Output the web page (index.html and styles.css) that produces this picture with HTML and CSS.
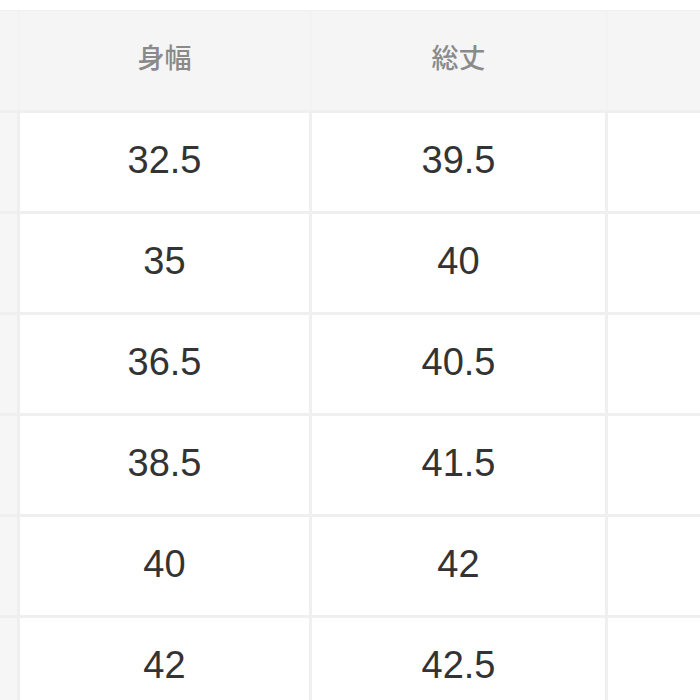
FILE: index.html
```html
<!DOCTYPE html>
<html lang="ja">
<head>
<meta charset="utf-8">
<link rel="stylesheet" href="styles.css">
</head>
<body>
<div class="table">
  <div class="head">
    <div class="hcell"></div>
    <div class="hcell">身幅</div>
    <div class="hcell">総丈</div>
    <div class="hcell"></div>
  </div>
  <div class="side"></div><div class="cell">32.5</div><div class="cell">39.5</div><div class="cell"></div>
  <div class="side"></div><div class="cell">35</div><div class="cell">40</div><div class="cell"></div>
  <div class="side"></div><div class="cell">36.5</div><div class="cell">40.5</div><div class="cell"></div>
  <div class="side"></div><div class="cell">38.5</div><div class="cell">41.5</div><div class="cell"></div>
  <div class="side"></div><div class="cell">40</div><div class="cell">42</div><div class="cell"></div>
  <div class="side"></div><div class="cell">42</div><div class="cell">42.5</div><div class="cell"></div>
</div>
</body>
</html>
```
FILE: styles.css
```css
html, body {
  margin: 0;
  padding: 0;
  background: #ffffff;
  overflow: hidden;
}
.table {
  margin-top: 10px;
  border-top: 1px solid #f0f0f0;
  display: grid;
  grid-template-columns: 17px 289px 293px 1fr;
  grid-template-rows: 99px repeat(6, 98px);
  column-gap: 3px;
  row-gap: 3px;
  background: #efefef;
  width: 100%;
  font-family: "Liberation Sans", Arial, sans-serif;
}
.head {
  grid-column: 1 / -1;
  display: grid;
  grid-template-columns: 17px 289px 293px 1fr;
  column-gap: 3px;
  background: #f3f3f3;
}
.hcell {
  background: #f5f5f5;
  display: flex;
  align-items: center;
  justify-content: center;
  color: #8a8a8a;
  font-family: "Noto Sans CJK JP", "Noto Sans", sans-serif;
  font-size: 27px;
  font-weight: 500;
  padding-bottom: 8px;
}
.side {
  background: #f6f6f6;
}
.cell {
  background: #ffffff;
  display: flex;
  align-items: center;
  justify-content: center;
  color: #333333;
  font-size: 38px;
  padding-bottom: 3px;
}
```
